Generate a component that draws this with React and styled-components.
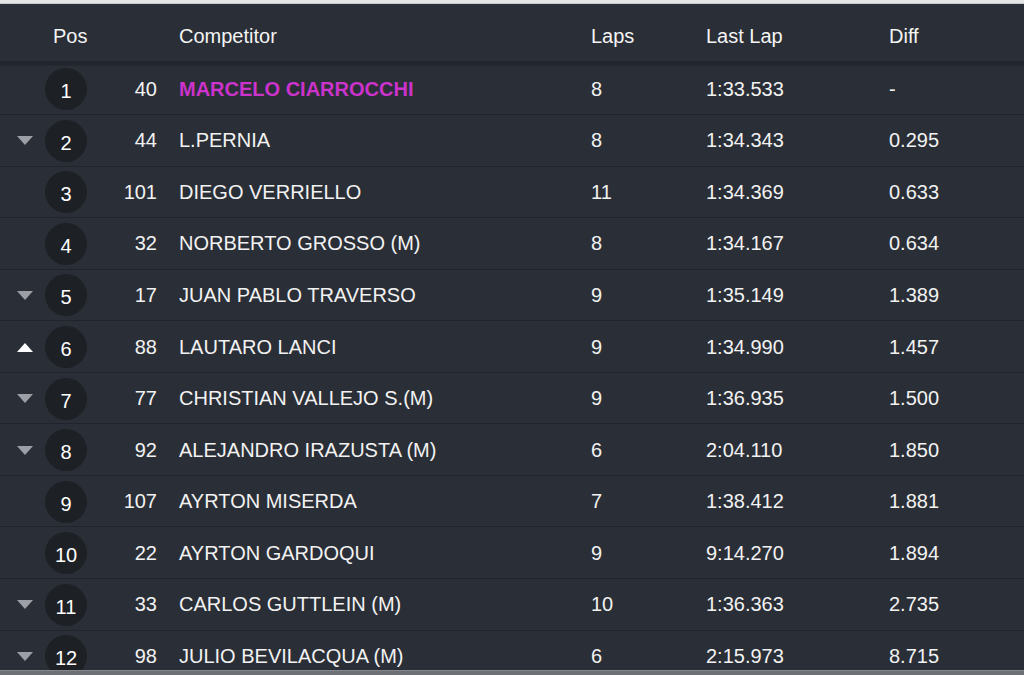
import styled, { createGlobalStyle } from 'styled-components';

const GlobalStyle = createGlobalStyle`
  html, body {
    margin: 0;
    padding: 0;
    background: #2a2e36;
    overflow: hidden;
  }
  * {
    box-sizing: border-box;
  }
`;

const Page = styled.div`
  height: 675px;
  display: flex;
  flex-direction: column;
  font-family: "Liberation Sans", Arial, sans-serif;
  color: #f2f2f2;
`;

const TopStrip = styled.div`
  height: 4px;
  flex-shrink: 0;
  background: #e4e4e4;
  border-bottom: 1px solid #c9c9c9;
`;

const Board = styled.div`
  flex: 1;
  min-height: 0;
  overflow: hidden;
  background: #2a2e36;
`;

const BottomBar = styled.div`
  height: 5px;
  flex-shrink: 0;
  background: #6d7075;
  border-top: 1px solid #84878b;
`;

const columns = '45px 42px 70px 434px 115px 183px 1fr';

const HeaderRow = styled.div`
  display: grid;
  grid-template-columns: ${columns};
  align-items: center;
  height: 59.5px;
  font-size: 20px;
  color: #f4f4f4;
  border-bottom: 3px solid #22252b;
  box-shadow: 0 1px 2px rgba(0, 0, 0, 0.25);
`;

const HeadCell = styled.div`
  white-space: nowrap;
  padding-left: ${p => p.$pad || 0}px;
  padding-top: 9px;
`;

const Row = styled.div`
  display: grid;
  grid-template-columns: ${columns};
  align-items: center;
  height: 51.55px;
  font-size: 20px;
  border-bottom: 1px solid #21242a;
  padding-top: 1px;
`;

const Trend = styled.div`
  justify-self: center;
  margin-left: 5px;
  width: 0;
  height: 0;
  border-left: 8px solid transparent;
  border-right: 8px solid transparent;
  ${p => p.$dir === 'up' && `border-bottom: 9px solid #ffffff;`}
  ${p => p.$dir === 'down' && `border-top: 9px solid #9c9fa5;`}
`;

const PosBadge = styled.div`
  width: 42px;
  height: 42px;
  border-radius: 50%;
  background: #1d2025;
  display: flex;
  align-items: center;
  justify-content: center;
  padding-top: 5px;
  font-size: 20px;
  color: #ffffff;
`;

const CarNumber = styled.div`
  text-align: right;
`;

const Name = styled.div`
  padding-left: 22px;
  white-space: nowrap;
  font-weight: ${p => (p.$leader ? 700 : 400)};
  color: ${p => (p.$leader ? '#cc33cc' : '#f2f2f2')};
`;

const Cell = styled.div`
  white-space: nowrap;
`;

const results = [
  { pos: 1, trend: null, num: 40, name: 'MARCELO CIARROCCHI', laps: 8, last: '1:33.533', diff: '-' },
  { pos: 2, trend: 'down', num: 44, name: 'L.PERNIA', laps: 8, last: '1:34.343', diff: '0.295' },
  { pos: 3, trend: null, num: 101, name: 'DIEGO VERRIELLO', laps: 11, last: '1:34.369', diff: '0.633' },
  { pos: 4, trend: null, num: 32, name: 'NORBERTO GROSSO (M)', laps: 8, last: '1:34.167', diff: '0.634' },
  { pos: 5, trend: 'down', num: 17, name: 'JUAN PABLO TRAVERSO', laps: 9, last: '1:35.149', diff: '1.389' },
  { pos: 6, trend: 'up', num: 88, name: 'LAUTARO LANCI', laps: 9, last: '1:34.990', diff: '1.457' },
  { pos: 7, trend: 'down', num: 77, name: 'CHRISTIAN VALLEJO S.(M)', laps: 9, last: '1:36.935', diff: '1.500' },
  { pos: 8, trend: 'down', num: 92, name: 'ALEJANDRO IRAZUSTA (M)', laps: 6, last: '2:04.110', diff: '1.850' },
  { pos: 9, trend: null, num: 107, name: 'AYRTON MISERDA', laps: 7, last: '1:38.412', diff: '1.881' },
  { pos: 10, trend: null, num: 22, name: 'AYRTON GARDOQUI', laps: 9, last: '9:14.270', diff: '1.894' },
  { pos: 11, trend: 'down', num: 33, name: 'CARLOS GUTTLEIN (M)', laps: 10, last: '1:36.363', diff: '2.735' },
  { pos: 12, trend: 'down', num: 98, name: 'JULIO BEVILACQUA (M)', laps: 6, last: '2:15.973', diff: '8.715' },
];

export default function App() {
  return (
    <>
      <GlobalStyle />
      <Page>
        <TopStrip />
        <Board>
          <HeaderRow>
            <HeadCell />
            <HeadCell $pad={8}>Pos</HeadCell>
            <HeadCell />
            <HeadCell $pad={22}>Competitor</HeadCell>
            <HeadCell>Laps</HeadCell>
            <HeadCell>Last Lap</HeadCell>
            <HeadCell>Diff</HeadCell>
          </HeaderRow>
          {results.map(r => (
            <Row key={r.pos}>
              <Trend $dir={r.trend} />
              <PosBadge>{r.pos}</PosBadge>
              <CarNumber>{r.num}</CarNumber>
              <Name $leader={r.pos === 1}>{r.name}</Name>
              <Cell>{r.laps}</Cell>
              <Cell>{r.last}</Cell>
              <Cell>{r.diff}</Cell>
            </Row>
          ))}
        </Board>
        <BottomBar />
      </Page>
    </>
  );
}
